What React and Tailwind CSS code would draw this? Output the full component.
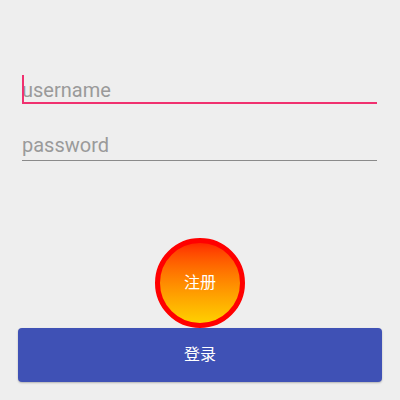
import React from 'react';

export default function App() {
    return (
        <div className="w-[400px] h-[400px] bg-[#eeeeee] flex flex-col overflow-hidden" style={{ fontFamily: 'Roboto, "Noto Sans CJK SC", sans-serif' }}>
            {/* 输入框 */}
            <div className="pl-[22px] pr-[23px] pt-[78px]">
                <div className="relative h-[26px] border-b-2 border-[#f0306f] flex items-start">
                    <span className="absolute left-0 top-[-3px] w-[2px] h-[27px] bg-[#f0306f]"></span>
                    <span className="text-[20px] leading-[24px] text-[#9a9a9a]">username</span>
                </div>
                <div className="mt-[29px] h-[28px] border-b border-[#8a8a8a] flex items-start">
                    <span className="text-[20px] leading-[24px] text-[#9a9a9a]">password</span>
                </div>
            </div>

            {/* 注册 */}
            <div className="flex justify-center mt-[77px]">
                <button className="w-[90px] h-[90px] rounded-full border-[5px] border-[#ff0000] bg-gradient-to-b from-[#ff2600] to-[#ffd000] text-white text-[16px] flex items-center justify-center">
                    注册
                </button>
            </div>

            {/* 登录 */}
            <div className="px-[18px]">
                <button className="w-full h-[54px] rounded-[4px] bg-[#3f51b5] text-white text-[16px] shadow-[0_1px_2px_rgba(0,0,0,0.25)] flex items-center justify-center">
                    登录
                </button>
            </div>
        </div>
    );
}
